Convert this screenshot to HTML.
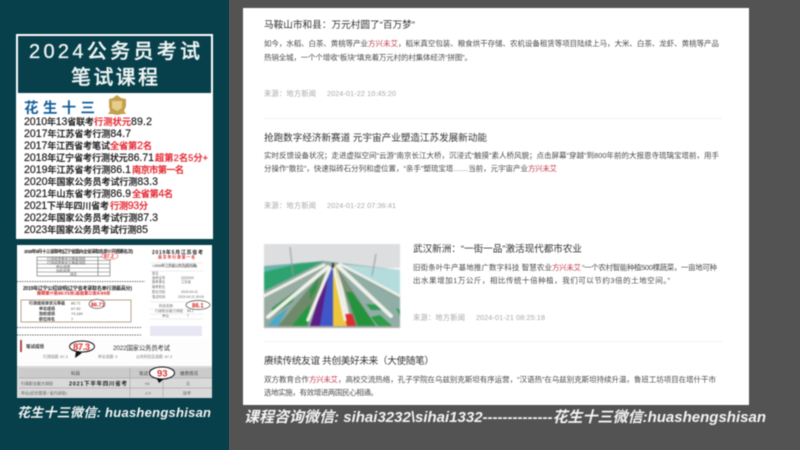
<!DOCTYPE html>
<html lang="zh">
<head>
<meta charset="utf-8">
<title>2024公务员考试笔试课程</title>
<style>
html,body{margin:0;padding:0;width:800px;height:450px;overflow:hidden;background:#535353}
svg{display:block;position:absolute;left:0;top:0}
text{font-family:"Liberation Sans","Noto Sans CJK SC",sans-serif;white-space:pre}
.b{filter:blur(.4px)}
.ph{filter:blur(.5px)}
.t{font-size:9.6px;fill:#333}
.p{font-size:7.5px;fill:#4a4a4a}
.m{font-size:7.2px;fill:#a8a8a8}
.r{fill:#c0394b}
.l{font-size:9px;font-weight:500;fill:#1c1c1c;stroke:#1c1c1c;stroke-width:.18px}
.e{font-size:9.2px;font-weight:500;fill:#e5202a;stroke:#e5202a;stroke-width:.18px}
.d{font-size:10.6px}
.x{font-weight:700;fill:#222}
.w{font-weight:700;font-style:italic;fill:#f4f4f4}
.h{font-size:20px;font-weight:500;fill:#eef4f4;stroke:#eef4f4;stroke-width:.3px}
</style>
</head>
<body>
<svg width="800" height="450" viewBox="0 0 800 450" xmlns="http://www.w3.org/2000/svg">
<rect width="800" height="450" fill="#535353"/>
<rect width="229" height="450" fill="#07404a"/>

<g class="b">
<!-- left title card -->
<rect x="16" y="34" width="197" height="205" fill="#fff"/>
<rect x="18" y="36" width="193" height="57" fill="#07404a"/>
<text class="h" x="29" y="58" textLength="171">2024公务员考试</text>
<text class="h" x="71" y="84" textLength="87">笔试课程</text>
<text x="24" y="113" font-size="14.500" font-weight="700" fill="#14609c" textLength="71">花生十三</text>
<path d="M109 99l4-1 4-3 4 3 5 1v7l-2 5 2 3h-4l-5 1-5-1h-4l2-3-1-5z" fill="#c4a04e"/>
<path d="M112 101h10v7l-5 3-5-3z" fill="#e6cd8c"/>

<text class="l" x="24" y="125" textLength="70"><tspan class="d">2010</tspan>年<tspan class="d">13</tspan>省联考</text><text class="e" x="94" y="125" textLength="37">行测状元</text><text class="l d" x="131" y="125" textLength="21">89.2</text>
<text class="l" x="24" y="137" textLength="107"><tspan class="d">2017</tspan>年江苏省考行测<tspan class="d">84.7</tspan></text>
<text class="l" x="24" y="149" textLength="86"><tspan class="d">2017</tspan>年江西省考笔试</text><text class="e" x="110" y="149" textLength="42">全省第<tspan class="d">2</tspan>名</text>
<text class="l" x="24" y="161" textLength="130"><tspan class="d">2018</tspan>年辽宁省考行测状元<tspan class="d">86.71</tspan></text><text class="e" x="155" y="161" textLength="53">超第2名5分+</text>
<text class="l" x="24" y="173" textLength="107"><tspan class="d">2019</tspan>年江苏省考行测<tspan class="d">86.1</tspan></text><text class="e" x="132" y="173" textLength="52">南京市第一名</text>
<text class="l" x="24" y="185" textLength="134"><tspan class="d">2020</tspan>年国家公务员考试行测<tspan class="d">83.3</tspan></text>
<text class="l" x="24" y="197" textLength="107"><tspan class="d">2021</tspan>年山东省考行测<tspan class="d">86.9</tspan></text><text class="e" x="132" y="197" textLength="41">全省第<tspan class="d">4</tspan>名</text>
<text class="l" x="24" y="209" textLength="85"><tspan class="d">2021</tspan>下半年四川省考</text><text class="e" x="110" y="209" textLength="38">行测<tspan class="d">93</tspan>分</text>
<text class="l" x="24" y="221" textLength="134"><tspan class="d">2022</tspan>年国家公务员考试行测<tspan class="d">87.3</tspan></text>
<text class="l" x="24" y="233" textLength="124"><tspan class="d">2023</tspan>年国家公务员考试行测<tspan class="d">85</tspan></text>

<!-- left evidence collage -->
<rect x="17" y="245" width="195" height="153" fill="#fff"/>
<text x="24" y="253" font-size="4.6" class="x" textLength="109">2018年8月十三省联考(辽宁省面向全省录取名单公开摘要名次)</text>
<g fill="none" stroke="#666" stroke-width=".6">
<rect x="37" y="257" width="73" height="19"/>
<path d="M37 260.500h73M37 264h73M37 268h73M37 272h73M98 257v19"/>
</g>
<g fill="#555" font-size="3.500"><text x="47" y="260">行测成绩单状元等级测验</text><text x="47" y="264">行测成绩单状元等级测验</text><text x="56" y="268">申论成绩</text><text x="56" y="272">加权成绩</text><text x="70" y="275.500">排名</text></g>
<ellipse cx="110" cy="256" rx="8" ry="3.500" fill="#fff" stroke="#d55" stroke-width=".6"/>
<text x="104" y="258" font-size="5" font-weight="700" fill="#d22">87.2</text>
<path d="M17 281.500h128" stroke="#444" stroke-width=".8" stroke-dasharray="1.500 1"/>
<text x="23" y="290" font-size="5" class="x" textLength="109">2019年辽宁公招说明(辽宁省考录取名单行测最高分)</text>
<rect x="37" y="291" width="73" height="4" fill="#f6cfcf"/>
<text x="37" y="294.500" font-size="3.800" font-weight="700" fill="#d22" textLength="73">独得第一名86.71分,高出第二名5.54分</text>
<rect x="21" y="300" width="110" height="22" fill="#fff" stroke="#b8a68c" stroke-width="1"/>
<g font-size="4" font-weight="700" fill="#333"><text x="29" y="304.500" textLength="36">行测成绩单状元等级</text><text x="39" y="310">申论成绩</text><text x="39" y="315">加权成绩</text><text x="39" y="320.500">职位排名</text></g>
<g font-size="3.800" fill="#555"><text x="71" y="304.500">86.71</text><text x="71" y="310">67.00</text><text x="71" y="315">74.169</text><text x="71" y="320.500">7</text></g>
<ellipse cx="97" cy="304" rx="8" ry="4.500" fill="#fff" stroke="#555" stroke-width=".7"/>
<text x="91" y="306.300" font-size="5.500" font-weight="700" fill="#d22">86.71</text>
<path d="M17 327.500h125M17 335h125" stroke="#444" stroke-width=".8" stroke-dasharray="1.500 1"/>

<text x="152" y="254" font-size="5" class="x" textLength="51">2019年5月江苏省考</text>
<text x="158" y="258.500" font-size="3.800" font-weight="700" fill="#d22" textLength="37">南京市行测第一名</text>
<text x="152" y="267" font-size="3.800" fill="#333" textLength="45">&lt; 2019年江苏省公务员(报名确)</text>
<path d="M150 263h53M150 271h53" stroke="#ddd" stroke-width=".6"/>
<g font-size="3.300" fill="#666"><text x="152" y="274.500">姓名</text><text x="152" y="279">准考证号</text><text x="152" y="283">报考单位</text><text x="152" y="288">报考职位</text><text x="152" y="293">职位代码</text><text x="152" y="298">笔试时间</text><text x="181" y="279">3200000</text><text x="181" y="283">江苏省</text><text x="181" y="293">2019-04-21</text><text x="178" y="298">2019-04-21 09:00</text></g>
<g font-size="3.500" fill="#666"><text x="159" y="307">科目名称</text><text x="155" y="312">行政职业能力测验</text><text x="162" y="317">申论</text><text x="187" y="312">86.1</text><text x="187" y="317">7</text></g>
<path d="M150 302h53M150 309h53M150 314h53M150 319h53" stroke="#ddd" stroke-width=".5"/>
<ellipse cx="198" cy="305" rx="12" ry="4.500" fill="#fff" stroke="#444" stroke-width=".7"/>
<text x="192" y="307.300" font-size="6" font-weight="700" fill="#d22">86.1</text>
<rect x="150" y="326" width="52" height="10" fill="#e7e7f3"/>

<rect x="17" y="338" width="195" height="28" fill="#fdfdfd"/>
<rect x="20" y="340" width="2" height="12" fill="#b34a4a"/>
<text x="26" y="348" font-size="4.500" font-weight="700" fill="#333">笔试成绩</text>
<path d="M76 351l-1 7 7-5z" fill="#111"/>
<ellipse cx="82" cy="346.500" rx="12.500" ry="5.500" fill="#fff" stroke="#111" stroke-width="1"/>
<text x="73" y="350" font-size="9.500" font-weight="700" fill="#d33" textLength="17">87.3</text>
<text x="113" y="350" font-size="6.400" fill="#333" textLength="57">2022国家公务员考试</text>
<g font-size="3.800" fill="#777"><text x="43" y="358">行测成绩: 87.3</text><text x="98" y="358">申论成绩: 0</text><text x="136" y="358">公共科目总成绩: 87.3</text></g>

<rect x="17" y="366" width="195" height="32" fill="#d9d9d9"/>
<rect x="19" y="368" width="193" height="10" fill="#cbcbcb"/>
<path d="M19 378h193M19 388h193M130 368v29M163 378v19" stroke="#aaa" stroke-width=".7" fill="none"/>
<text x="71" y="375" font-size="4.500" fill="#444">科目</text>
<text x="139" y="375" font-size="4.500" fill="#444">笔试</text>
<text x="180" y="375" font-size="4.500" fill="#444">缴费情况</text>
<text x="21" y="385" font-size="4" fill="#555">行政职业能力测验</text>
<text x="69" y="385.500" font-size="5.600" font-weight="700" fill="#222" textLength="58">2021下半年四川省考</text>
<text x="145" y="385" font-size="4" fill="#666">93</text><text x="186" y="385" font-size="4" fill="#666">无</text>
<text x="21" y="394.500" font-size="4" fill="#666">申论(综合管理 / 省内录取)</text>
<text x="144" y="394.500" font-size="4" fill="#666">-1.0</text><text x="183" y="394.500" font-size="4" fill="#666">缺考</text>
<path d="M156 377l3 6 6-5z" fill="#111"/>
<ellipse cx="162" cy="373" rx="12.500" ry="6" fill="#fff" stroke="#111" stroke-width="1"/>
<text x="157" y="376.500" font-size="9.500" font-weight="700" fill="#d33">93</text>

<text class="w" x="17" y="417" font-size="13" textLength="194">花生十三微信: huashengshisan</text>

<!-- article card -->
<rect x="243" y="8" width="506" height="397" fill="#fff"/>

<text class="t" x="264" y="28" textLength="151">马鞍山市和县&#65306;万元村圆了“百万梦”</text>
<text class="p" x="264" y="46" textLength="104">如今&#65292;水稻、白茶、黄桃等产业</text>
<text class="p r" x="368" y="46" textLength="30">方兴未艾</text>
<text class="p" x="398" y="46" textLength="321">&#65292;稻米真空包装、粮食烘干存储、农机设备租赁等项目陆续上马&#65292;大米、白茶、龙虾、黄桃等产品</text>
<text class="p" x="264" y="60" textLength="208">热销全城&#65292;一个个增收“板块”填充着万元村的村集体经济“拼图”。</text>
<text class="m" x="264" y="96" textLength="52">来源&#65306;地方新闻</text>
<text class="m" x="327" y="96" textLength="69">2024-01-22 10:45:20</text>
<rect x="264" y="118" width="458" height="1" fill="#f3f3f3"/>

<text class="t" x="264" y="141" textLength="223">抢跑数字经济新赛道 元宇宙产业塑造江苏发展新动能</text>
<text class="p" x="264" y="158" textLength="455">实时反馈设备状况&#65307;走进虚拟空间“云游”南京长江大桥&#65292;沉浸式“触摸”素人桥风貌&#65307;点击屏幕“穿越”到800年前的大报恩寺琉璃宝塔前&#65292;用手</text>
<text class="p" x="264" y="171" textLength="264">分操作“散拉”&#65292;快速拟砖石分列和虚位置&#65292;“亲手”塑琉宝塔……当前&#65292;元宇宙产业</text>
<text class="p r" x="528" y="171" textLength="29">方兴未艾</text>
<text class="m" x="264" y="208" textLength="52">来源&#65306;地方新闻</text>
<text class="m" x="327" y="208" textLength="69">2024-01-22 07:36:41</text>

<!-- photo -->
<g class="ph">
<rect x="264" y="244" width="136" height="85" fill="#fff"/>
<rect x="264" y="244" width="136" height="24" fill="#dcdedf"/>
<path d="M264 266l60-5 76 9v56H264z" fill="#8fa99f"/>
<path d="M264 268l60-7-24 12-36 18z" fill="#2fa36f"/>
<path d="M264 268l42-6-42 10z" fill="#5fb7b2"/>
<path d="M264 296l60-31-56 52-4 2z" fill="#98aca2"/>
<path d="M272 308l30-22-10 16-20 14z" fill="#3f8f52"/>
<path d="M268 326l6-8 14-10-10 18z" fill="#4fa8c6"/>
<path d="M278 326l48-58-18 58z" fill="#6e8a6a"/>
<path d="M292 326l18-22-3 22z" fill="#229a3f"/>
<path d="M310 290l9-12-3 12-6 10z" fill="#2c9345"/>
<path d="M310 326l19-60h1l-10 60z" fill="#5a1f86"/>
<path d="M320 326l10-60h3l0 60z" fill="#3f57c8"/>
<path d="M333 326v-60l3 0 11 60z" fill="#ecc63c"/>
<path d="M347 326l-11-60 2 0 14 60z" fill="#eeeeea"/>
<path d="M347 326l-3-12 12 0 4 12z" fill="#dc2f2f"/>
<path d="M356 326l-20-60 40 60z" fill="#7b8f74"/>
<path d="M358 326l-12-34 6 0 24 34z" fill="#25933e"/>
<path d="M376 326l-38-60 62 34v26z" fill="#90ada6"/>
<path d="M378 326l-7-9 9-2 12 11z" fill="#2e9c48"/>
<path d="M396 308l4 2v6z" fill="#2e9c48"/>
<path d="M366 304l14 1 5 5-14 0z" fill="#2f9a50"/>
<path d="M400 270l-60-6 60 32z" fill="#b5dcdc"/>
<g stroke="#f0f1ea" fill="none" stroke-linecap="round">
<path d="M264 296l60-31" stroke-width="3"/>
<path d="M268 317l60-50" stroke-width="4"/>
<path d="M308 320l22-52" stroke-width="3.500"/>
<path d="M345 320l-11-52" stroke-width="3"/>
<path d="M391 316l-53-50" stroke-width="4"/>
<path d="M400 296l-60-32" stroke-width="2.500"/>
</g>
<path d="M290 247l3 28M376 254l-4 22" stroke="#999" stroke-width="1" fill="none"/>
<rect x="332" y="263" width="2" height="5" fill="#333"/>
<rect x="264" y="326" width="136" height="2" fill="#a9a9a9"/>
</g>

<text class="t" x="413" y="252" textLength="169">武汉新洲&#65306;“一街一品”激活现代都市农业</text>
<text class="p" x="413" y="270" textLength="139">旧街条叶牛产基地推广数字科技 智慧农业</text>
<text class="p r" x="552" y="270" textLength="29">方兴未艾</text>
<text class="p" x="582" y="270" textLength="135">“一个农村智能种植500棵蔬菜&#65292;一亩地可种</text>
<text class="p" x="413" y="283" textLength="257">出水果增加1万公斤&#65292;相比传统十倍种植&#65292;我们可以节约3倍的土地空间。”</text>
<text class="m" x="413" y="320" textLength="52">来源&#65306;地方新闻</text>
<text class="m" x="476" y="320" textLength="69">2024-01-21 08:25:18</text>
<rect x="264" y="341" width="458" height="1" fill="#f1f1f1"/>

<text class="t" x="264" y="364" textLength="170">赓续传统友谊 共创美好未来&#65288;大使随笔&#65289;</text>
<text class="p" x="264" y="382" textLength="45">双方教育合作</text>
<text class="p r" x="309" y="382" textLength="29">方兴未艾</text>
<text class="p" x="338" y="382" textLength="378">&#65292;高校交流热络&#65292;孔子学院在乌兹别克斯坦有序运营&#65292;“汉语热”在乌兹别克斯坦持续升温&#65292;鲁班工坊项目在塔什干市</text>
<text class="p" x="264" y="395" textLength="114">选地实施&#65292;有效增进两国民心相通。</text>

<text class="w" x="244" y="422" font-size="15" textLength="522">课程咨询微信: sihai3232\sihai1332--------------花生十三微信:huashengshisan</text>
</g>
</svg>
</body>
</html>
